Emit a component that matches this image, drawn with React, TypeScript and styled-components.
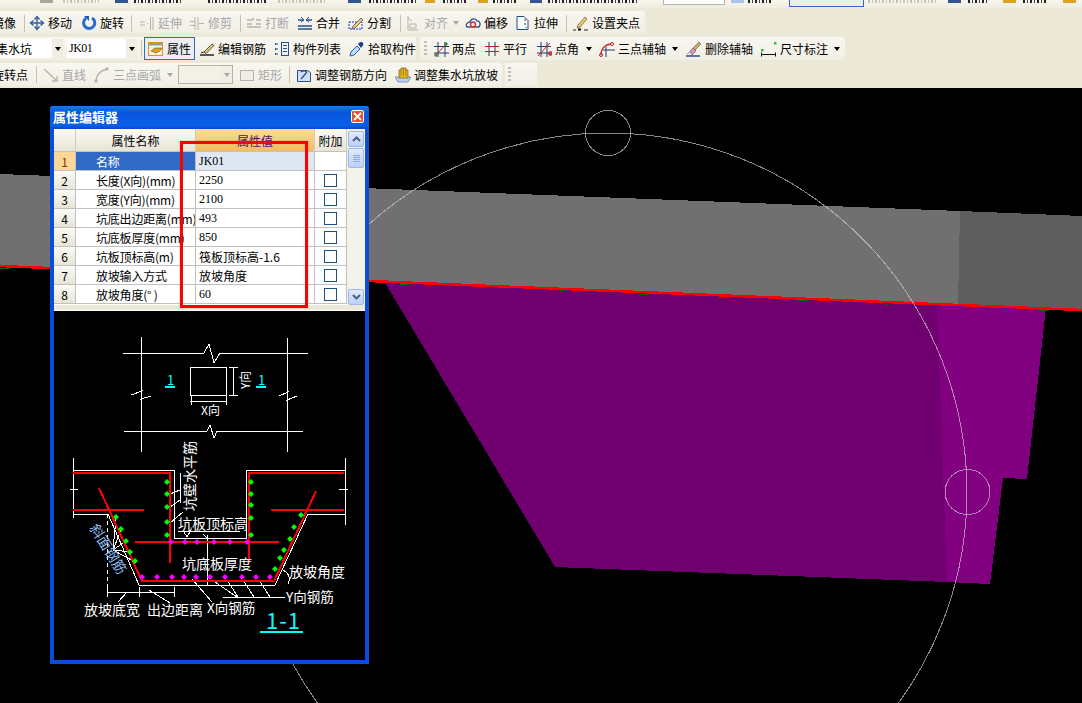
import React from 'react';
import styled, { createGlobalStyle } from 'styled-components';

const CJK = '"Noto Sans CJK SC", "Liberation Sans", sans-serif';

const GlobalStyle = createGlobalStyle`
  html, body { margin: 0; padding: 0; background: #000; overflow: hidden; }
  * { box-sizing: border-box; }
`;

const Page = styled.div`
  width: 1082px;
  height: 703px;
  display: flex;
  flex-direction: column;
  font-family: ${CJK};
  font-size: 12px;
  color: #000;
`;

const ToolArea = styled.div`
  height: 88px;
  flex: none;
  background: #ece9d8;
  overflow: hidden;
  display: flex;
  flex-direction: column;
`;

const TopStrip = styled.div`
  height: 8px;
  flex: none;
  margin-bottom: 3px;
  display: flex;
  overflow: hidden;
  background: linear-gradient(#f7f6ee, #efede0);
`;

/* row is scrolled off the screen: only the feet of its glyphs are left */
const TopBit = styled.span<{ $w: number; $ml: number; $grey?: boolean }>`
  flex: none;
  width: ${(p) => p.$w}px;
  margin-left: ${(p) => p.$ml}px;
  height: 3px;
  background: repeating-linear-gradient(
    90deg,
    ${(p) => (p.$grey ? '#c4c3b8' : '#222')} 0 2px,
    transparent 2px 4px,
    ${(p) => (p.$grey ? '#c4c3b8' : '#444')} 4px 5px,
    transparent 5px 7px
  );
`;

const TopIcon = styled.span<{ $w: number; $ml: number; $c: string }>`
  flex: none;
  width: ${(p) => p.$w}px;
  margin-left: ${(p) => p.$ml}px;
  height: 3px;
  background: ${(p) => p.$c};
`;

const TopField = styled.span<{ $w: number; $ml: number }>`
  flex: none;
  width: ${(p) => p.$w}px;
  margin-left: ${(p) => p.$ml}px;
  height: 5px;
  background: #fff;
  border: 1px solid #b8b6a8;
  border-top: 0;
`;

const TopActive = styled.span<{ $w: number; $ml: number }>`
  flex: none;
  width: ${(p) => p.$w}px;
  margin-left: ${(p) => p.$ml}px;
  height: 7px;
  background: #eceef0;
  border: 1px solid #316ac5;
  border-top: 0;
`;

const Row = styled.div<{ $h: number; $mb: number }>`
  height: ${(p) => p.$h}px;
  margin-bottom: ${(p) => p.$mb}px;
  flex: none;
  display: flex;
`;

const Strip = styled.div<{ $ml?: number; $pt?: number }>`
  display: flex;
  align-items: center;
  flex: none;
  margin-left: ${(p) => p.$ml ?? 0}px;
  padding-top: ${(p) => p.$pt ?? 0}px;
  background: linear-gradient(#f8f7f1, #f1efe4);
  border-radius: 0 3px 3px 0;
  overflow: hidden;
`;

const Tool = styled.div<{ $w: number; $on?: boolean; $off?: boolean }>`
  flex: none;
  width: ${(p) => p.$w}px;
  height: 100%;
  padding-left: ${(p) => (p.$on ? 3 : 4)}px;
  display: flex;
  align-items: center;
  color: ${(p) => (p.$off ? '#a7a6aa' : '#000')};
  background: ${(p) => (p.$on ? '#eceef0' : 'transparent')};
  border: ${(p) => (p.$on ? '1px solid #316ac5' : '0')};
`;

const IconBox = styled.svg`
  width: 16px;
  height: 16px;
  flex: none;
  margin-right: 3px;
`;

const Label = styled.span`
  white-space: nowrap;
  line-height: 14px;
`;

const CutLabel = styled(Label)<{ $ml: number; $w: number }>`
  flex: none;
  margin-left: ${(p) => p.$ml}px;
  width: ${(p) => p.$w}px;
`;

const Caret = styled.span<{ $ml: number; $grey?: boolean }>`
  flex: none;
  width: 0;
  height: 0;
  margin-left: ${(p) => p.$ml}px;
  border-left: 3.5px solid transparent;
  border-right: 3.5px solid transparent;
  border-top: 4px solid ${(p) => (p.$grey ? '#a7a6aa' : '#000')};
`;

const Sep = styled.span<{ $l: number; $r: number }>`
  flex: none;
  width: 1px;
  height: 17px;
  margin: 0 ${(p) => p.$r}px 0 ${(p) => p.$l}px;
  background: #c5c2b0;
`;

const Grip = styled.span<{ $l: number; $r: number }>`
  flex: none;
  width: 3px;
  height: 15px;
  margin: 0 ${(p) => p.$r}px 0 ${(p) => p.$l}px;
  background: repeating-linear-gradient(#c1bfae 0 2px, transparent 2px 4px);
`;

const Combo = styled.div<{ $w: number; $ml: number; $off?: boolean }>`
  flex: none;
  width: ${(p) => p.$w}px;
  margin-left: ${(p) => p.$ml}px;
  height: 19px;
  display: flex;
  align-items: center;
  background: ${(p) => (p.$off ? '#f3f1e7' : '#fff')};
  border: ${(p) => (p.$off ? '1px solid #b5b3a5' : '0')};
`;

const ComboText = styled.span<{ $ml: number; $latin?: boolean }>`
  flex: 1;
  margin-left: ${(p) => p.$ml}px;
  white-space: nowrap;
  overflow: hidden;
  ${(p) => (p.$latin ? 'font-family: "Liberation Serif", serif; letter-spacing: -0.5px;' : '')}
`;

const ComboArrow = styled.span`
  flex: none;
  width: 11px;
  height: 100%;
  background: #f0eee2;
  display: flex;
  align-items: center;
  justify-content: center;
`;

const Canvas = styled.div`
  flex: 1;
  position: relative;
  background: #000;
  overflow: hidden;
`;

const Scene = styled.svg`
  position: absolute;
  left: 0;
  top: 0;
  width: 1082px;
  height: 615px;
`;

const Dialog = styled.div`
  position: absolute;
  left: 50px;
  top: 18px;
  width: 319px;
  height: 558px;
  display: flex;
  flex-direction: column;
  background: #0a4ddc;
  border: solid #0a4ddc;
  border-width: 0 4px 4px;
  border-radius: 3px 3px 0 0;
`;

const TitleBar = styled.div`
  height: 23px;
  flex: none;
  margin: 0 -4px;
  padding: 0 5px 2px 3px;
  display: flex;
  align-items: center;
  justify-content: space-between;
  border-radius: 3px 3px 0 0;
  background: linear-gradient(#0f7cf2, #0855dd 30%, #0a5fe8 85%, #0848c8);
`;

const Title = styled.span`
  color: #fff;
  font-weight: 700;
  font-size: 13px;
`;

const CloseBtn = styled.span`
  width: 13px;
  height: 13px;
  display: flex;
  align-items: center;
  justify-content: center;
  border: 1px solid #fff;
  border-radius: 2px;
  background: #e0532c;
`;

const GridWrap = styled.div`
  height: 176px;
  flex: none;
  display: flex;
  background: #fff;
`;

const Table = styled.table`
  width: 293px;
  flex: none;
  table-layout: fixed;
  border-collapse: separate;
  border-spacing: 0;
  font-size: 12px;
  align-self: flex-start;
`;

const HeadCell = styled.th<{ $active?: boolean }>`
  height: 23px;
  padding: 0;
  font-weight: 400;
  text-align: center;
  color: ${(p) => (p.$active ? '#5a0a6a' : '#000')};
  background: ${(p) =>
    p.$active ? 'linear-gradient(#fcdc9e, #f2bb5e)' : 'linear-gradient(#fbfaf4, #e8e5d6)'};
  border-right: 1px solid #cfccbc;
  border-bottom: 1px solid #c6c3b3;
`;

const RowHead = styled.td<{ $active?: boolean }>`
  height: 19px;
  padding: 0;
  text-align: center;
  color: ${(p) => (p.$active ? '#7a3a00' : '#000')};
  background: ${(p) => (p.$active ? '#fdd596' : 'linear-gradient(#fbfaf4, #e8e5d6)')};
  border-right: 1px solid #c0c0c0;
  border-bottom: 1px solid #c0c0c0;
`;

const NameCell = styled.td<{ $active?: boolean }>`
  height: 19px;
  padding: 0 0 0 20px;
  white-space: nowrap;
  overflow: hidden;
  letter-spacing: -0.2px;
  color: ${(p) => (p.$active ? '#fff' : '#000')};
  background: ${(p) => (p.$active ? '#316ac5' : '#fff')};
  border-right: 1px solid #c0c0c0;
  border-bottom: 1px solid #c0c0c0;
`;

const ValueCell = styled.td<{ $active?: boolean; $latin?: boolean }>`
  height: 19px;
  padding: ${(p) => (p.$latin ? '1px' : '0')} 0 0 3px;
  white-space: nowrap;
  overflow: hidden;
  background: ${(p) => (p.$active ? '#dfe7f3' : '#fff')};
  border-right: 1px solid #c0c0c0;
  border-bottom: 1px solid #c0c0c0;
  ${(p) => (p.$latin ? 'font-family: "Liberation Serif", serif; font-size: 12px;' : '')}
`;

const CheckCell = styled.td`
  height: 19px;
  padding: 0;
  background: #fff;
  border-right: 1px solid #c0c0c0;
  border-bottom: 1px solid #c0c0c0;
`;

const Check = styled.span`
  display: block;
  width: 13px;
  height: 13px;
  margin: 0 auto;
  border: 1px solid #1c5180;
  background: #fff;
`;

const ScrollBar = styled.div`
  width: 18px;
  flex: none;
  padding: 2px 1px 0;
  display: flex;
  flex-direction: column;
  background: #f4f3ea;
`;

const ScrollBtn = styled.div`
  height: 16px;
  flex: none;
  display: flex;
  align-items: center;
  justify-content: center;
  border: 1px solid #9fb6e6;
  border-radius: 2px;
  background: linear-gradient(#e2ebfe, #bccffa);
`;

const Thumb = styled(ScrollBtn)`
  height: 20px;
  margin-top: 1px;
  flex-direction: column;
  gap: 1px;
`;

const ThumbLine = styled.span`
  width: 7px;
  height: 1px;
  background: #8ea8e0;
`;

const ScrollGap = styled.div`
  flex: 1;
`;

const Splitter = styled.div`
  height: 6px;
  flex: none;
  background: #ece9d8;
  border-bottom: 1px solid #fff;
`;

const Picture = styled.svg`
  width: 311px;
  height: 349px;
  flex: none;
  display: block;
  background: #000;
`;

const DrawText = styled.text<{ $size?: number; $fill?: string }>`
  font-family: ${CJK};
  font-size: ${(p) => p.$size ?? 14}px;
  fill: ${(p) => p.$fill ?? '#fff'};
`;

const RedBox = styled.div`
  position: absolute;
  left: 126px;
  top: 35px;
  width: 128px;
  height: 167px;
  border: 3px solid #f00;
  box-shadow: 0 0 1px rgba(255, 0, 0, 0.6);
`;

const Strut = styled.span`
  flex: none;
  width: 2px;
`;

const icons: Record<string, React.ReactNode> = {
  move: (
    <g fill="none" stroke="#2f5f9e" strokeWidth="1.4">
      <path d="M8 2v12M2 8h12" />
      <path d="M5.500 4.500 8 1.500l2.500 3M5.500 11.500 8 14.500l2.500-3M4.500 5.500 1.500 8l3 2.500M11.500 5.500l3 2.500-3 2.500" />
    </g>
  ),
  rotate: (
    <g fill="none">
      <path d="M5 3.200A5.600 5.600 0 1 0 11 3" stroke="#2a6bd0" strokeWidth="3" />
      <path d="M3 1h5v5z" fill="#1d55b5" />
    </g>
  ),
  extend: (
    <g fill="none" stroke="#b4b3a8">
      <path d="M1 7h5M1 10h5M8 8.500h1M11.500 2v13M14 2v13" />
    </g>
  ),
  trim: (
    <g fill="none" stroke="#b4b3a8">
      <path d="M1 6.500h5M1 10.500h5M6 2v13M9 2v13M10 8.500h5" />
    </g>
  ),
  cut: (
    <g fill="none" stroke="#b4b3a8" strokeWidth="1.5">
      <path d="M1 5h5l2-2M10 5h5M1 12h14M1 9h5M10 9h5" />
    </g>
  ),
  merge: (
    <g fill="none" stroke="#2b4f86" strokeWidth="1.5">
      <path d="M1 5h5M10 5h5M1 11h14M1 14h14" />
      <path d="M4 2l3 3-3 2M12 2 9 5l3 2" strokeWidth="1" />
    </g>
  ),
  split: (
    <g fill="none">
      <rect x="1" y="7" width="13" height="7" stroke="#1030e0" strokeDasharray="2 1" />
      <path d="M5 11 13 3l2 2-8 8-3 1z" fill="#e9c96f" stroke="#555" strokeWidth=".8" />
    </g>
  ),
  align: (
    <g fill="none" stroke="#b4b3a8">
      <path d="M3 1v14h10" />
      <path d="M3 3l4 3M5 9h6v4H5z" />
    </g>
  ),
  offset: (
    <g>
      <path d="M2 12c-2-3 1-5 3-5 1-4 6-4 7-1 3 0 4 3 2 6z" fill="#fff" stroke="#33558c" strokeWidth="1.4" />
      <circle cx="8" cy="9.500" r="2.500" fill="none" stroke="#e03030" strokeWidth="1.6" />
    </g>
  ),
  stretch: (
    <g fill="none" stroke="#1f4b8c">
      <path d="M2 1.500h7l4 4v9H2z" fill="#fff" />
      <path d="M9 5h2M10 8v2M11 12v1" stroke="#333" />
    </g>
  ),
  grips: (
    <g>
      <path d="M5 10 12 2l2 2-7 8-3 1z" fill="#e9c96f" stroke="#7a6a3a" strokeWidth=".8" />
      <path d="M0 15h3M11 15h4" stroke="#222" />
      <rect x="5" y="13.500" width="3" height="2" fill="#000" />
    </g>
  ),
  attr: (
    <g>
      <rect x=".5" y="1.500" width="14" height="13" fill="#fff3dc" stroke="#e88c28" />
      <rect x="1" y="2" width="13" height="2.500" fill="#9a9a9a" />
      <path d="M3 10l4-3h7l-2 3-4 2z" fill="#d9a520" stroke="#6b5010" strokeWidth=".6" />
    </g>
  ),
  rebar: (
    <g>
      <path d="M5 11 13 3l2 1.500-8 8z" fill="#e9c96f" stroke="#333" strokeWidth=".8" />
      <path d="M1 14h14" stroke="#222" strokeWidth="1.5" />
      <path d="M2 12l3-1" stroke="#222" />
    </g>
  ),
  list: (
    <g fill="none" stroke="#2b4f86">
      <rect x="7.500" y="1.500" width="7" height="13" fill="#eef2fa" />
      <path d="M9 4.500h4M9 7.500h4M9 10.500h4" />
      <path d="M1 3h3M1 8h3M1 13h3" strokeWidth="2" strokeDasharray="1.500 1" />
    </g>
  ),
  pick: (
    <g>
      <path d="M1 15l1-4 6-6 3 3-6 6z" fill="#bfe0ff" stroke="#2b5aa8" />
      <path d="M9 3l1.500-1.500c1-1 3-.5 3.500.5s.5 2-.5 3L12 7z" fill="#1d3f8c" />
    </g>
  ),
  twoPoints: (
    <g fill="none">
      <path d="M5 1v15M12 1v15M1 5.500h15M1 12h15" stroke="#1f3a70" />
      <path d="M2 15 14 2" stroke="#d01818" />
      <circle cx="13" cy="3" r="1.700" fill="#3a8a3a" />
      <circle cx="3" cy="14" r="1.700" fill="#3a8a3a" />
    </g>
  ),
  parallel: (
    <g fill="none">
      <path d="M5 1v14M11 1v14" stroke="#1f3a70" />
      <path d="M1 5.500h14M1 10.500h14" stroke="#c81818" />
    </g>
  ),
  angle: (
    <g fill="none">
      <path d="M5 1v15M11 1v15M1 5.500h14M1 12h14" stroke="#1f3a70" />
      <path d="M2 15 14 2" stroke="#d01818" />
      <circle cx="14.500" cy="12.500" r="1.500" stroke="#d01818" strokeWidth="1.400" />
    </g>
  ),
  arcAxis: (
    <g fill="none">
      <path d="M2 14C2 7 7 3 12 3" stroke="#c82020" strokeWidth="1.400" />
      <path d="M7 6v10M4 9h12" stroke="#1f3a70" />
      <circle cx="13" cy="3" r="1.500" stroke="#c82020" />
      <circle cx="2" cy="14" r="1.500" stroke="#c82020" />
    </g>
  ),
  eraser: (
    <g>
      <path d="M7 7l6-6 2 2-6 6z" fill="#c9b060" stroke="#555" strokeWidth=".6" />
      <path d="M4 10l3-3 3 3-4 4z" fill="#e090c8" stroke="#555" strokeWidth=".6" />
      <path d="M0 15h14" stroke="#2b4f86" strokeWidth="1.500" />
      <path d="M1 13l3-2" stroke="#99a" />
    </g>
  ),
  dimension: (
    <g>
      <rect x="0" y="8" width="2.500" height="2.500" fill="#3ab54a" />
      <rect x="13" y="1" width="2.500" height="2.500" fill="#3ab54a" />
      <path d="M.5 11.500v4M14.500 11.500v4M1 13.500h13" stroke="#111" fill="none" />
    </g>
  ),
  line: (
    <g fill="none" stroke="#b4b3a8" strokeWidth="1.300">
      <path d="M1 2 14 14M14 9v5H9" />
    </g>
  ),
  arc: (
    <g fill="none" stroke="#b4b3a8" strokeWidth="1.300">
      <path d="M2 15C2 8 7 3 13 2" />
      <circle cx="13" cy="2" r="1" />
      <circle cx="2" cy="14" r="1" />
    </g>
  ),
  rect: <rect x="1.500" y="3.500" width="13" height="10" fill="#efeee6" stroke="#b4b3a8" />,
  adjustRebar: (
    <g>
      <path d="M1.500 3.500h10l3 2v9h-13z" fill="#cfe0f5" stroke="#2b4f86" />
      <path d="M5 12l6-7M5 5c2-2 5-1 6 0" fill="none" stroke="#2b4f86" strokeWidth="1.300" />
    </g>
  ),
  adjustPit: (
    <g>
      <path d="M0 10h16l-3 5H3z" fill="#b8cff0" stroke="#5a7ab0" strokeWidth=".7" />
      <path d="M4 11V3h2v-2h5v2h2v8z" fill="#e8b820" stroke="#7a5a10" strokeWidth=".7" />
      <path d="M6 3v6M8.500 1v8M11 3v6" stroke="#7a5a10" strokeWidth=".6" />
    </g>
  ),
};

const Icon = ({ name }: { name: string }) => <IconBox viewBox="0 0 16 16">{icons[name]}</IconBox>;

type ToolProps = {
  icon: string;
  label: string;
  w: number;
  off?: boolean;
  on?: boolean;
  caret?: number;
};

const ToolItem = ({ icon, label, w, off, on, caret }: ToolProps) => (
  <Tool $w={w} $off={off} $on={on}>
    <Icon name={icon} />
    <Label>{label}</Label>
    {caret ? <Caret $ml={caret} $grey={off} /> : null}
  </Tool>
);

const rows = [
  { name: '名称', value: 'JK01', latin: true },
  { name: '长度(X向)(mm)', value: '2250', latin: true },
  { name: '宽度(Y向)(mm)', value: '2100', latin: true },
  { name: '坑底出边距离(mm)', value: '493', latin: true },
  { name: '坑底板厚度(mm)', value: '850', latin: true },
  { name: '坑板顶标高(m)', value: '筏板顶标高-1.6' },
  { name: '放坡输入方式', value: '放坡角度' },
  { name: '放坡角度(° )', value: '60', latin: true },
];

const Arrow = ({ up }: { up?: boolean }) => (
  <svg width="9" height="6" viewBox="0 0 9 6">
    <path d={up ? 'M1 5 4.500 1.500 8 5' : 'M1 1 4.500 4.500 8 1'} fill="none" stroke="#4d6185" strokeWidth="2" />
  </svg>
);

const greenDots = [
  [167, 482], [167, 494], [167, 507], [167, 522], [167, 535],
  [251, 482], [251, 494], [251, 505], [251, 518], [251, 535],
  [116, 517], [121, 529], [126, 541], [130, 552], [135, 561],
  [301, 515], [294, 527], [290, 539], [284, 550], [280, 558], [275, 569],
];

const pinkDots = [
  [142, 577], [157, 577], [172, 577], [184, 577], [196, 577], [210, 577], [225, 577], [242, 577], [256, 577], [270, 577],
  [171, 542], [185, 542], [197, 542], [214, 542], [230, 542], [247, 542],
];

const whiteLines = [
  'M141 337V452M287 338V452M123 353H204L209 344 214 363 220 353H308M124 431H207L210 425 214 438 217 431H303',
  'M131 395 142 391 141 399 151 396M279 396 288 392 287 400 297 396',
  'M190 367H226V395H190ZM190 401H226M191 396V405M226 396V405M233 367V395M229 367H238M229 395H238',
  'M73 458V518M73 470H174V538H246V470H345M345 458V525',
  'M73 514H108L139 585H275L308 514H345',
  'M107 592H174M107 587V597M139 587V597M174 587V597M127 592 118 602M149 590 170 603',
  'M223 597H285M212 580 237 597M227 580 238 597M243 580 254 597M259 580 270 597M192 579 212 602',
  'M180 473V503M170 494 180 490M170 507 180 500M170 523 183 512',
  'M178 531H240M184 532 187 537 190 532M207 535V586M203 534 207 538',
  'M113 550 116 518M113 550 121 530M113 550 126 541M113 550 130 552M113 550 135 562',
  'M283 570A10 10 0 0 1 288 584',
  'M70 489H78M339 489H348',
];

const App = () => (
  <Page>
    <GlobalStyle />
    <ToolArea>
      <TopStrip>
        <TopIcon $w={13} $ml={40} $c="#a9a89c" />
        <TopBit $w={36} $ml={10} $grey />
        <TopIcon $w={13} $ml={16} $c="#33558c" />
        <TopBit $w={48} $ml={6} />
        <TopBit $w={60} $ml={26} />
        <TopBit $w={48} $ml={10} $grey />
        <TopIcon $w={13} $ml={22} $c="#33558c" />
        <TopBit $w={48} $ml={8} />
        <TopIcon $w={10} $ml={8} $c="#d9a520" />
        <TopBit $w={24} $ml={8} />
        <TopIcon $w={10} $ml={11} $c="#d9a520" />
        <TopBit $w={24} $ml={5} />
        <TopIcon $w={12} $ml={13} $c="#33558c" />
        <TopBit $w={90} $ml={6} />
        <TopField $w={62} $ml={25} />
        <TopIcon $w={13} $ml={6} $c="#a8c4e8" />
        <TopBit $w={25} $ml={4} />
        <TopActive $w={75} $ml={16} />
        <TopBit $w={70} $ml={4} $grey />
        <TopIcon $w={13} $ml={10} $c="#33558c" />
        <TopBit $w={20} $ml={7} />
        <TopIcon $w={13} $ml={15} $c="#d9a520" />
        <TopBit $w={25} $ml={7} />
        <TopIcon $w={13} $ml={15} $c="#d9a520" />
      </TopStrip>

      <Row $h={22} $mb={4}>
        <Strip $pt={2}>
          <CutLabel $ml={-8} $w={24}>镜像</CutLabel>
          <Sep $l={8} $r={0} />
          <ToolItem icon="move" label="移动" w={52} />
          <ToolItem icon="rotate" label="旋转" w={51} />
          <Sep $l={3} $r={3} />
          <ToolItem icon="extend" label="延伸" w={50} off />
          <ToolItem icon="trim" label="修剪" w={50} off />
          <Sep $l={5} $r={1} />
          <ToolItem icon="cut" label="打断" w={51} off />
          <ToolItem icon="merge" label="合并" w={51} />
          <ToolItem icon="split" label="分割" w={51} />
          <Sep $l={5} $r={0} />
          <ToolItem icon="align" label="对齐" w={60} off caret={5} />
          <ToolItem icon="offset" label="偏移" w={50} />
          <ToolItem icon="stretch" label="拉伸" w={50} />
          <Sep $l={5} $r={2} />
          <ToolItem icon="grips" label="设置夹点" w={76} />
        </Strip>
      </Row>

      <Row $h={23} $mb={3}>
        <Strip>
          <Combo $w={63} $ml={0}>
            <ComboText $ml={-4}>集水坑</ComboText>
            <ComboArrow><Caret $ml={0} /></ComboArrow>
          </Combo>
          <Combo $w={70} $ml={4}>
            <ComboText $ml={2} $latin>JK01</ComboText>
            <ComboArrow><Caret $ml={0} /></ComboArrow>
          </Combo>
          <Sep $l={4} $r={2} />
          <ToolItem icon="attr" label="属性" w={51} on />
          <ToolItem icon="rebar" label="编辑钢筋" w={75} />
          <ToolItem icon="list" label="构件列表" w={75} />
          <ToolItem icon="pick" label="拾取构件" w={71} />
        </Strip>
        <Strip $ml={4}>
          <Grip $l={4} $r={2} />
          <ToolItem icon="twoPoints" label="两点" w={51} />
          <ToolItem icon="parallel" label="平行" w={52} />
          <ToolItem icon="angle" label="点角" w={63} caret={7} />
          <ToolItem icon="arcAxis" label="三点辅轴" w={87} caret={6} />
          <ToolItem icon="eraser" label="删除辅轴" w={75} />
          <ToolItem icon="dimension" label="尺寸标注" w={88} caret={6} />
        </Strip>
      </Row>

      <Row $h={23} $mb={2}>
        <Strip>
          <CutLabel $ml={-8} $w={36}>旋转点</CutLabel>
          <Sep $l={8} $r={2} />
          <ToolItem icon="line" label="直线" w={51} off />
          <ToolItem icon="arc" label="三点画弧" w={84} off caret={6} />
          <Combo $w={55} $ml={4} $off>
            <ComboText $ml={0} />
            <ComboArrow><Caret $ml={0} $grey /></ComboArrow>
          </Combo>
          <Strut />
          <ToolItem icon="rect" label="矩形" w={51} off />
          <Sep $l={3} $r={2} />
          <ToolItem icon="adjustRebar" label="调整钢筋方向" w={99} />
          <ToolItem icon="adjustPit" label="调整集水坑放坡" w={111} />
        </Strip>
        <Strip $ml={3}>
          <Grip $l={3} $r={26} />
        </Strip>
      </Row>
    </ToolArea>

    <Canvas>
      <Scene viewBox="0 88 1082 615" shapeRendering="crispEdges">
        <polygon points="0,174 960,211 958,306 0,266" fill="#707070" />
        <polygon points="960,211 1082,216 1082,310 958,306" fill="#5e5e5e" />
        <polygon points="384,281 937,303 947,582 555,567" fill="#700070" />
        <polygon points="937,303 1046,308 1027,479 1003,478 990,584 947,582" fill="#800080" />
        <line x1="0" y1="268" x2="1082" y2="312" stroke="#006400" strokeWidth="1" strokeDasharray="10 70" />
        <line x1="0" y1="266" x2="1082" y2="310" stroke="#f00" strokeWidth="2.500" />
        <g fill="none" stroke="#d0d0d0" strokeOpacity="0.65" strokeWidth="1">
          <circle cx="608" cy="492" r="359" />
          <circle cx="608" cy="133" r="22.500" />
          <circle cx="967.500" cy="492" r="22.500" />
        </g>
      </Scene>

      <Dialog>
        <TitleBar>
          <Title>属性编辑器</Title>
          <CloseBtn>
            <svg width="9" height="9" viewBox="0 0 9 9">
              <path d="M1 1l7 7M8 1 1 8" stroke="#fff" strokeWidth="1.800" />
            </svg>
          </CloseBtn>
        </TitleBar>

        <GridWrap>
          <Table>
            <colgroup>
              <col width="22" />
              <col width="120" />
              <col width="119" />
              <col width="32" />
            </colgroup>
            <thead>
              <tr>
                <HeadCell />
                <HeadCell>属性名称</HeadCell>
                <HeadCell $active>属性值</HeadCell>
                <HeadCell>附加</HeadCell>
              </tr>
            </thead>
            <tbody>
              {rows.map((r, i) => (
                <tr key={r.name}>
                  <RowHead $active={i === 0}>{i + 1}</RowHead>
                  <NameCell $active={i === 0}>{r.name}</NameCell>
                  <ValueCell $active={i === 0} $latin={r.latin}>{r.value}</ValueCell>
                  <CheckCell>{i > 0 ? <Check /> : null}</CheckCell>
                </tr>
              ))}
            </tbody>
          </Table>
          <ScrollBar>
            <ScrollBtn><Arrow up /></ScrollBtn>
            <Thumb>
              <ThumbLine />
              <ThumbLine />
              <ThumbLine />
              <ThumbLine />
            </Thumb>
            <ScrollGap />
            <ScrollBtn><Arrow /></ScrollBtn>
          </ScrollBar>
        </GridWrap>

        <Splitter />

        <Picture viewBox="54 311 311 349">
          <g shapeRendering="crispEdges">
            <path d={whiteLines.join('')} fill="none" stroke="#fff" strokeWidth="1" />
            <path d="M107 514V587" fill="none" stroke="#fff" strokeDasharray="4 3" />
            <path
              d="M73 473H170V563M249 563V473H344M135 542H279M73 510H144M271 510H344M99 488 142 581H274L316 491"
              fill="none"
              stroke="#f00"
              strokeWidth="2"
            />
            <path d="M165 387h10M256 387h10M260 632h43" stroke="#0ff" strokeWidth="2" />
          </g>
          {greenDots.map(([x, y]) => (
            <path key={`${x}-${y}`} d={`M${x} ${y - 3}L${x + 3} ${y}L${x} ${y + 3}L${x - 3} ${y}Z`} fill="#0f0" />
          ))}
          {pinkDots.map(([x, y]) => (
            <path key={`${x}-${y}`} d={`M${x} ${y - 3}L${x + 3} ${y}L${x} ${y + 3}L${x - 3} ${y}Z`} fill="#f0f" />
          ))}
          <DrawText x="167" y="385" $size={13} $fill="#0ff">1</DrawText>
          <DrawText x="258" y="385" $size={13} $fill="#0ff">1</DrawText>
          <DrawText x="201" y="415" $size={12}>X向</DrawText>
          <DrawText x="0" y="0" $size={12} transform="translate(250 389) rotate(-90)">Y向</DrawText>
          <DrawText x="0" y="0" $size={14} transform="translate(195 511) rotate(-90)">坑壁水平筋</DrawText>
          <DrawText x="178" y="529" $size={14}>坑板顶标高</DrawText>
          <DrawText x="182" y="569" $size={14}>坑底板厚度</DrawText>
          <DrawText x="289" y="577" $size={14}>放坡角度</DrawText>
          <DrawText x="286" y="602" $size={13.500}>Y向钢筋</DrawText>
          <DrawText x="84" y="615" $size={14}>放坡底宽</DrawText>
          <DrawText x="147" y="615" $size={14}>出边距离</DrawText>
          <DrawText x="207" y="613" $size={13.500}>X向钢筋</DrawText>
          <DrawText x="0" y="0" $size={14} $fill="#8fbdf0" transform="translate(89 528) rotate(58)">斜面钢筋</DrawText>
          <DrawText x="266" y="629" $size={22} $fill="#0ff" letterSpacing="1">1-1</DrawText>
        </Picture>

        <RedBox />
      </Dialog>
    </Canvas>
  </Page>
);

export default App;
